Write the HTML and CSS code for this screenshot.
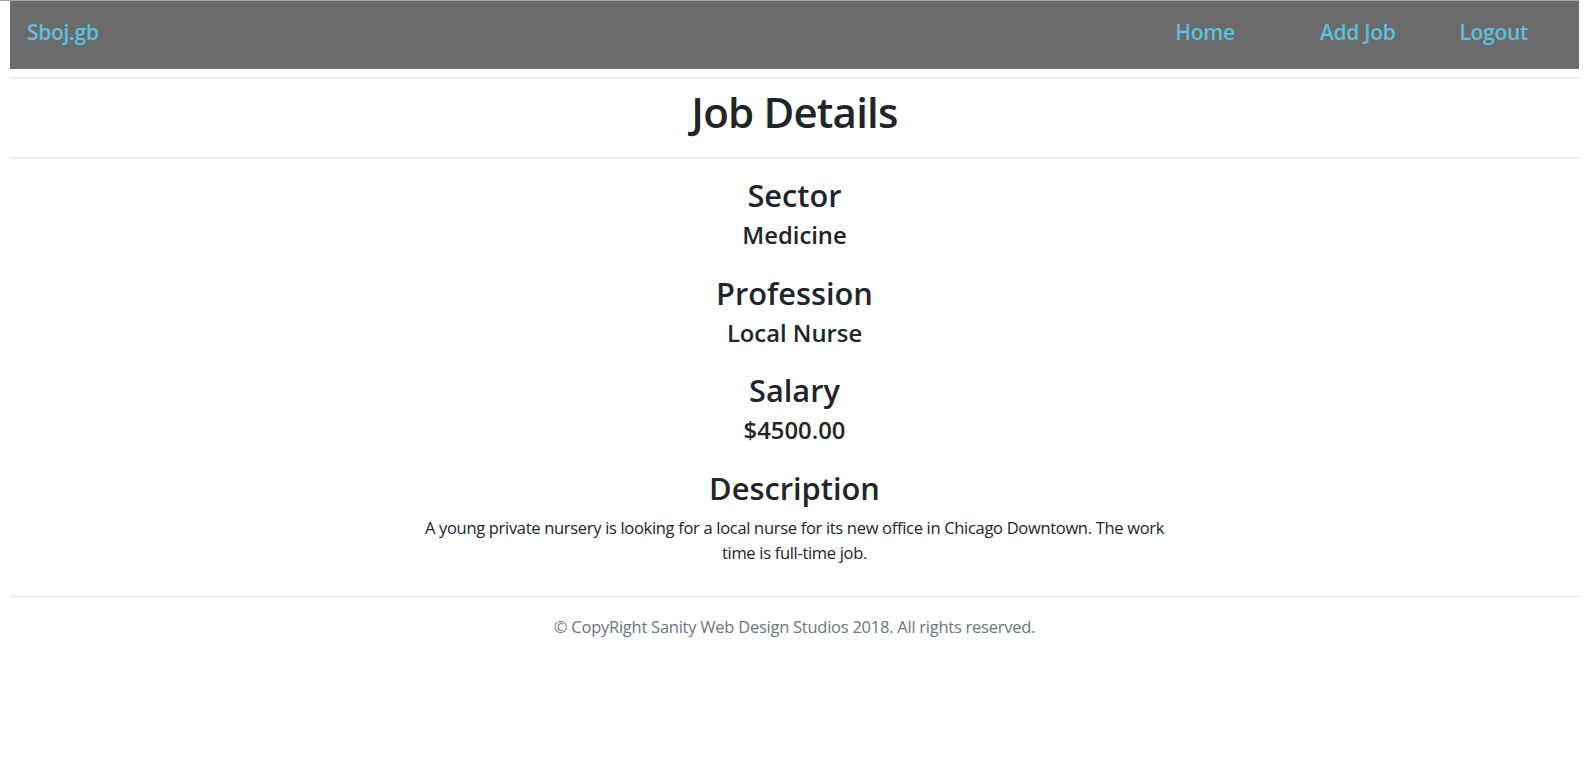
FILE: index.html
```html
<!DOCTYPE html>
<html lang="en">
<head>
<meta charset="utf-8">
<title>Job Details</title>
<link rel="stylesheet" href="styles.css">
</head>
<body>
<div class="page">
  <nav class="navbar">
    <a class="brand" href="#">Sboj.gb</a>
    <ul class="nav">
      <li class="nav-item home"><a class="nav-link" href="#">Home</a></li>
      <li class="nav-item add"><a class="nav-link" href="#">Add Job</a></li>
      <li class="nav-item logout"><a class="nav-link" href="#">Logout</a></li>
    </ul>
  </nav>
  <hr class="rule rule-top">
  <h1 class="title">Job Details</h1>
  <hr class="rule rule-mid">
  <main class="details">
    <section class="field">
      <h3 class="label">Sector</h3>
      <h5 class="value">Medicine</h5>
    </section>
    <section class="field">
      <h3 class="label">Profession</h3>
      <h5 class="value">Local Nurse</h5>
    </section>
    <section class="field">
      <h3 class="label">Salary</h3>
      <h5 class="value">$4500.00</h5>
    </section>
    <section class="field">
      <h3 class="label">Description</h3>
      <p class="desc">A young private nursery is looking for a local nurse for its new office in Chicago Downtown. The work time is full-time job.</p>
    </section>
  </main>
  <hr class="rule rule-foot">
  <footer class="footer">© CopyRight Sanity Web Design Studios 2018. All rights reserved.</footer>
</div>
</body>
</html>
```

FILE: styles.css
```css
html, body {
  margin: 0;
  padding: 0;
  background: #ffffff;
}

body {
  font-family: "Open Sans", "Noto Sans", sans-serif;
  color: #212529;
}

.page {
  margin-right: 14px;
  padding-left: 10px;
  border-top: 1px solid #a4a4a4;
}

.navbar {
  box-sizing: border-box;
  height: 68px;
  background: #6b6b6b;
  display: flex;
  align-items: flex-start;
  padding: 15.5px 51px 0 17px;
}

.brand {
  font-size: 21px;
  line-height: 30px;
  font-weight: 600;
  letter-spacing: -0.3px;
  color: #5bc0de;
  text-decoration: none;
}

.nav {
  display: flex;
  list-style: none;
  margin: 0 0 0 auto;
  padding: 0;
}

.nav-link {
  font-size: 21px;
  line-height: 30px;
  font-weight: 600;
  letter-spacing: -0.3px;
  color: #5bc0de;
  text-decoration: none;
}

.add {
  margin-left: 85px;
}

.logout {
  margin-left: 64px;
}

.rule {
  border: 0;
  margin: 0;
  height: 2px;
  background: #eeeeee;
}

.rule-top {
  margin-top: 8px;
}

.title {
  margin: 5.9px 0 0;
  font-size: 42px;
  line-height: 53px;
  font-weight: 600;
  letter-spacing: -0.8px;
  text-align: center;
}

.rule-mid {
  margin-top: 19.1px;
}

.details {
  display: flex;
  flex-direction: column;
  align-items: center;
  padding-top: 18.5px;
  text-align: center;
}

.field {
  margin-top: 25.5px;
}

.field:first-child {
  margin-top: 0;
}

.label {
  margin: 0;
  font-size: 30.8px;
  line-height: 37px;
  font-weight: 600;
}

.value {
  margin: 7px 0 0;
  font-size: 23.8px;
  line-height: 28px;
  font-weight: 600;
}

.desc {
  width: 754px;
  margin: 7.6px 0 0;
  font-size: 16.5px;
  line-height: 25px;
  letter-spacing: -0.31px;
  font-weight: 400;
}

.rule-foot {
  margin-top: 31.4px;
  height: 1px;
  background: #e2e2e2;
}

.footer {
  margin-top: 17.4px;
  font-size: 16.5px;
  line-height: 25px;
  letter-spacing: -0.25px;
  text-align: center;
  color: #6c757d;
}
```
